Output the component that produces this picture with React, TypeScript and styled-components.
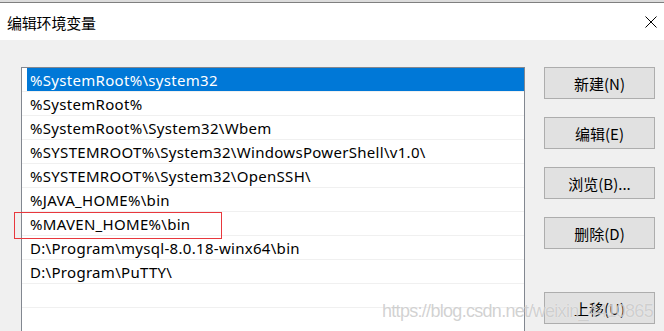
import React from "react";
import styled, { createGlobalStyle } from "styled-components";

const GlobalStyle = createGlobalStyle`
  html, body {
    margin: 0;
    padding: 0;
    background: #f0f0f0;
  }
  body {
    width: 664px;
    height: 331px;
    overflow: hidden;
    font-family: "Noto Sans", "Noto Sans CJK SC", sans-serif;
    color: #000;
  }
`;

const Window = styled.div`
  position: relative;
  width: 664px;
  height: 331px;
  overflow: hidden;
  background: #f0f0f0;
  display: flex;
  flex-direction: column;
`;

const TopStrip = styled.div`
  flex-shrink: 0;
  height: 2px;
  background: #dcdcdc;
  border-bottom: 1px solid #7f7f7f;
`;

const TitleBar = styled.div`
  flex-shrink: 0;
  height: 37px;
  background: #fff;
  display: flex;
  align-items: center;
  justify-content: space-between;
  padding: 0 6px 0 7px;
`;

const Title = styled.span`
  font-size: 15px;
  font-family: "Noto Sans CJK SC", sans-serif;
  letter-spacing: -0.2px;
  margin-top: 1px;
`;

const Close = styled.svg`
  width: 12px;
  height: 12px;
  margin-right: 1px;
`;

const Body = styled.div`
  flex-shrink: 0;
  display: flex;
  padding: 27px 0 0 21px;
  gap: 19px;
`;

const ListBox = styled.div`
  position: relative;
  width: 502px;
  height: 290px;
  background: #fff;
  border: 1px solid #828790;
  flex-shrink: 0;
`;

const Row = styled.div`
  height: 23px;
  border-bottom: 1px solid #f0f0f0;
  display: flex;
  padding-left: 5px;
`;

const Cell = styled.div<{ $selected?: boolean }>`
  flex: 1;
  display: flex;
  align-items: center;
  padding-left: 3px;
  font-size: 15px;
  letter-spacing: 0.3px;
  white-space: nowrap;
  overflow: hidden;
  background: ${({ $selected }) => ($selected ? "#0078d7" : "transparent")};
  color: ${({ $selected }) => ($selected ? "#fff" : "#000")};
`;

const Mark = styled.div`
  position: absolute;
  left: -8px;
  top: 144px;
  width: 206px;
  height: 25px;
  border: 1px solid #e8383d;
`;

const Buttons = styled.div`
  display: flex;
  flex-direction: column;
  gap: 18px;
`;

const Button = styled.button<{ $gapTop?: number }>`
  width: 111px;
  height: 32px;
  margin-top: ${({ $gapTop }) => $gapTop ?? 0}px;
  background: #e1e1e1;
  border: 1px solid #adadad;
  font-family: "Noto Sans CJK SC", sans-serif;
  font-size: 15px;
  color: #000;
  padding: 0;
`;

const Watermark = styled.div`
  position: absolute;
  right: 11px;
  top: 301px;
  font-family: "Liberation Sans", Arial, sans-serif;
  font-size: 18px;
  letter-spacing: -0.7px;
  color: rgba(165, 165, 165, 0.5);
  text-shadow: 0 0 1px rgba(255, 255, 255, 0.9);
  white-space: nowrap;
  pointer-events: none;
`;

const paths = [
  "%SystemRoot%\\system32",
  "%SystemRoot%",
  "%SystemRoot%\\System32\\Wbem",
  "%SYSTEMROOT%\\System32\\WindowsPowerShell\\v1.0\\",
  "%SYSTEMROOT%\\System32\\OpenSSH\\",
  "%JAVA_HOME%\\bin",
  "%MAVEN_HOME%\\bin",
  "D:\\Program\\mysql-8.0.18-winx64\\bin",
  "D:\\Program\\PuTTY\\",
  "",
  "",
  "",
];

export default function App() {
  return (
    <Window>
      <GlobalStyle />
      <TopStrip />
      <TitleBar>
        <Title>编辑环境变量</Title>
        <Close viewBox="0 0 12 12">
          <path d="M0.5 0.5 L11.5 11.5 M11.5 0.5 L0.5 11.5" stroke="#000" strokeWidth="1" fill="none" />
        </Close>
      </TitleBar>
      <Body>
        <ListBox>
          {paths.map((p, i) => (
            <Row key={i}>
              <Cell $selected={i === 0}>{p}</Cell>
            </Row>
          ))}
          <Mark />
        </ListBox>
        <Buttons>
          <Button>新建(N)</Button>
          <Button>编辑(E)</Button>
          <Button>浏览(B)...</Button>
          <Button>删除(D)</Button>
          <Button $gapTop={25}>上移(U)</Button>
        </Buttons>
      </Body>
      <Watermark>https://blog.csdn.net/weixin_4410865</Watermark>
    </Window>
  );
}
